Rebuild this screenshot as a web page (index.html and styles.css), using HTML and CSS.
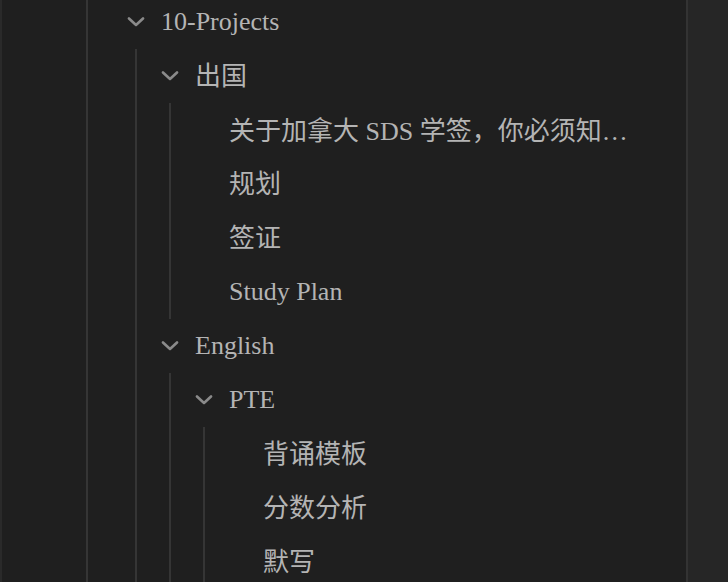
FILE: index.html
```html
<!DOCTYPE html>
<html lang="zh-CN">
<head>
<meta charset="utf-8">
<link rel="stylesheet" href="styles.css">
</head>
<body>
<div class="app">
  <nav class="panel">
    <div class="outer">
      <div class="folder">
        <div class="row">
          <svg class="chev" viewBox="0 0 18 10"><polyline points="2,1.5 9,8 16,1.5"/></svg>
          <span class="title">10-Projects</span>
        </div>
        <div class="children">
          <div class="folder">
            <div class="row">
              <svg class="chev" viewBox="0 0 18 10"><polyline points="2,1.5 9,8 16,1.5"/></svg>
              <span class="title cjk">出国</span>
            </div>
            <div class="children">
              <div class="row leaf"><span class="title mixed">关于加拿大 SDS 学签，你必须知…</span></div>
              <div class="row leaf"><span class="title cjk">规划</span></div>
              <div class="row leaf"><span class="title cjk">签证</span></div>
              <div class="row leaf"><span class="title">Study Plan</span></div>
            </div>
          </div>
          <div class="folder">
            <div class="row">
              <svg class="chev" viewBox="0 0 18 10"><polyline points="2,1.5 9,8 16,1.5"/></svg>
              <span class="title">English</span>
            </div>
            <div class="children">
              <div class="folder">
                <div class="row">
                  <svg class="chev" viewBox="0 0 18 10"><polyline points="2,1.5 9,8 16,1.5"/></svg>
                  <span class="title">PTE</span>
                </div>
                <div class="children">
                  <div class="row leaf"><span class="title cjk">背诵模板</span></div>
                  <div class="row leaf"><span class="title cjk">分数分析</span></div>
                  <div class="row leaf"><span class="title cjk">默写</span></div>
                </div>
              </div>
            </div>
          </div>
        </div>
      </div>
    </div>
  </nav>
  <div class="side"></div>
</div>
</body>
</html>
```
FILE: styles.css
```css
html, body {
  margin: 0;
  padding: 0;
  height: 100%;
  background: #1f1f1f;
  overflow: hidden;
}
.app {
  display: flex;
  height: 582px;
}
.panel {
  width: 684px;
  flex: none;
  border-left: 2px solid #2a2a2a;
  border-right: 2px solid #333333;
  background: #1f1f1f;
  overflow: hidden;
  font-family: "Liberation Serif", "Noto Sans CJK SC", serif;
  font-size: 26px;
  color: #b4b4b4;
}
.side {
  flex: 1;
  background: #262626;
}
.outer {
  margin-left: 84px;
  border-left: 2px solid #353535;
  padding-left: 31px;
  margin-top: -5px;
  min-height: 600px;
}
.row {
  display: flex;
  align-items: center;
  height: 54px;
  padding-left: 8px;
  white-space: nowrap;
}
.row.leaf {
  padding-left: 42px;
}
.chev {
  width: 18px;
  height: 10px;
  flex: none;
  margin-right: 16px;
  fill: none;
  stroke: #8a8a8a;
  stroke-width: 2.6;
  stroke-linecap: round;
  stroke-linejoin: round;
}
.title {
  white-space: nowrap;
}
.title.cjk {
  padding-bottom: 6px;
}
.title.mixed {
  padding-bottom: 3px;
}
.children {
  margin-left: 16px;
  border-left: 2px solid #353535;
  padding-left: 16px;
}
```
